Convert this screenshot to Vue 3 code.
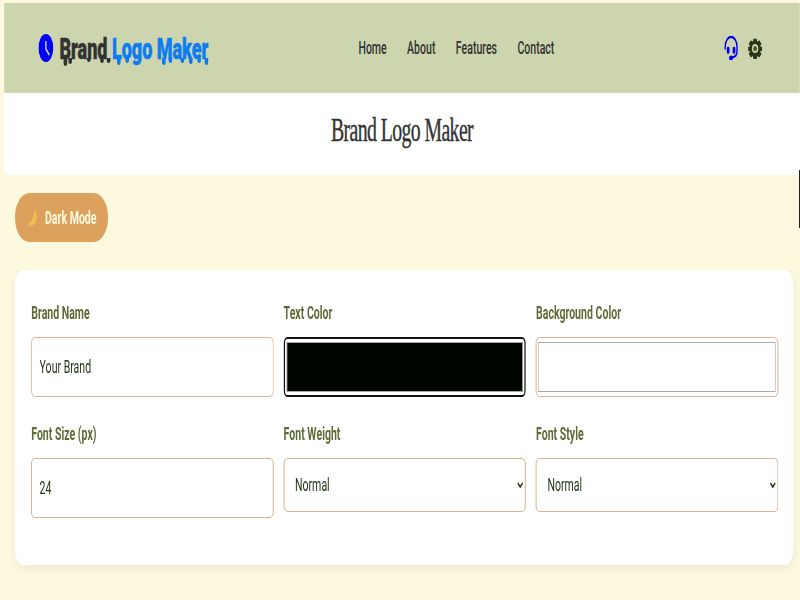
<template>
  <div class="page">
    <div class="stage">
      <nav class="navbar">
        <a class="logo" href="#">
          <svg class="clock" width="25" height="28" viewBox="0 0 26 28" preserveAspectRatio="none">
            <ellipse cx="13" cy="14" rx="12.8" ry="14" fill="#0000f5" />
            <path d="M13 7 L13 15 L19 21" fill="none" stroke="#cfd8ee" stroke-width="2.4" />
          </svg>
          <span class="logo-text">
            <span class="dark">Brand</span> <span class="blue">Logo Maker</span>
            <i
              v-for="d in drips"
              :key="d.x"
              class="drip"
              :style="{ left: d.x + 'px', height: d.h + 'px', background: d.c }"
            ></i>
          </span>
        </a>
        <ul class="links">
          <li v-for="l in links" :key="l"><a href="#">{{ l }}</a></li>
        </ul>
        <div class="icons">
          <svg width="25" height="25" viewBox="0 0 28 28" fill="none" stroke="#0000e6" preserveAspectRatio="none">
            <path d="M3 15 V12 A11 11 0 0 1 25 12 V18 Q25 23 16 24" stroke-width="2.6" />
            <rect x="6" y="12" width="5" height="8" rx="2" fill="#0000e6" stroke="none" />
            <rect x="17" y="12" width="5" height="8" rx="2" fill="#0000e6" stroke="none" />
            <ellipse cx="14" cy="24.5" rx="4" ry="2.6" fill="#0000e6" stroke="none" />
          </svg>
          <svg width="25" height="21" viewBox="0 0 28 28" preserveAspectRatio="none">
            <path
              fill="#283618"
              fill-rule="evenodd"
              d="M11 1h6l1 4 4-2 4 5-3 3 4 1v5l-4 1 3 3-4 5-4-2-1 4h-6l-1-4-4 2-4-5 3-3-4-1v-5l4-1-3-3 4-5 4 2zM14 8a6 6 0 1 0 0 12 6 6 0 0 0 0-12z"
            />
            <circle cx="14" cy="14" r="3.5" fill="#4a5530" />
          </svg>
        </div>
      </nav>

      <header class="title">
        <h1>Brand Logo Maker</h1>
      </header>

      <main class="content">
        <button class="mode">
          <svg width="18" height="18" viewBox="0 0 18 18" preserveAspectRatio="none">
            <path d="M11 0 C17 6 15 17 3 17 C1 17 0 15 1 14 C7 13 9 7 11 0z" fill="#f3bd52" />
          </svg>
          Dark Mode
        </button>

        <form class="card" @submit.prevent>
          <div class="grid">
            <div class="field">
              <label>Brand Name</label>
              <input class="box" type="text" value="Your Brand" />
            </div>
            <div class="field">
              <label>Text Color</label>
              <input class="box swatch focused" type="color" value="#000500" />
            </div>
            <div class="field">
              <label>Background Color</label>
              <input class="box swatch" type="color" value="#ffffff" />
            </div>
            <div class="field">
              <label>Font Size (px)</label>
              <input class="box" type="number" value="24" />
            </div>
            <div class="field">
              <label>Font Weight</label>
              <select class="pick">
                <option>Normal</option>
                <option>Bold</option>
              </select>
            </div>
            <div class="field">
              <label>Font Style</label>
              <select class="pick">
                <option>Normal</option>
                <option>Italic</option>
              </select>
            </div>
          </div>
        </form>
      </main>
    </div>
    <div class="thumb"></div>
  </div>
</template>

<script setup>
const links = ['Home', 'About', 'Features', 'Contact']

const dark = '#333'
const blue = '#0d7cf2'
const drips = [
  { x: 7, h: 8, c: dark },
  { x: 15, h: 6, c: dark },
  { x: 46, h: 4, c: dark },
  { x: 68, h: 5, c: dark },
  { x: 79, h: 5, c: dark },
  { x: 96, h: 7, c: blue },
  { x: 110, h: 5, c: blue },
  { x: 171, h: 7, c: blue },
  { x: 182, h: 5, c: blue },
  { x: 202, h: 5, c: blue },
  { x: 216, h: 6, c: blue },
  { x: 230, h: 5, c: blue },
  { x: 242, h: 7, c: blue }
]
</script>

<style>
html,
body {
  margin: 0;
  background: #fefae0;
  overflow: hidden;
}
</style>

<style scoped>
.page {
  position: relative;
  width: 800px;
  height: 600px;
  overflow: hidden;
  background: #fdf9de;
  font-family: Roboto, "Liberation Sans", sans-serif;
}
/* the whole page is narrowed, as in the reference */
.stage {
  width: 1333px;
  padding: 3px 0 0 7px;
  box-sizing: border-box;
  transform: scaleX(0.6);
  transform-origin: 0 0;
}
.navbar {
  display: flex;
  align-items: center;
  height: 90px;
  padding: 0 62px 0 57px;
  background: #cdd5ae;
}
.logo {
  display: flex;
  align-items: center;
  gap: 10px;
  text-decoration: none;
}
.logo-text {
  position: relative;
  font-size: 30px;
  font-weight: 900;
  white-space: nowrap;
  -webkit-text-stroke: 0.5px currentColor;
}
.dark {
  color: #333;
}
.blue {
  color: #0d7cf2;
}
.drip {
  position: absolute;
  top: 27px;
  width: 6px;
  border-radius: 0 0 3px 3px;
}
.links {
  display: flex;
  gap: 34px;
  margin: 0 0 0 250px;
  padding: 0;
  list-style: none;
}
.links a {
  color: #333;
  font-size: 17.6px;
  font-weight: 500;
  text-decoration: none;
}
.icons {
  display: flex;
  align-items: center;
  gap: 15px;
  margin-left: auto;
}
.title {
  height: 82px;
  padding-bottom: 8px;
  box-sizing: border-box;
  display: flex;
  align-items: center;
  justify-content: center;
  background: #fff;
}
.title h1 {
  margin: 0;
  color: #333;
  font-family: "Liberation Serif", serif;
  font-size: 33px;
  font-weight: 400;
  letter-spacing: -1px;
  -webkit-text-stroke: 0.4px #333;
}
.content {
  padding: 18px 11px 0 18px;
}
.mode {
  display: flex;
  align-items: center;
  gap: 10px;
  width: 155px;
  height: 49px;
  padding: 0 0 0 22px;
  border: none;
  border-radius: 24px;
  background: #dda15e;
  color: #fefae0;
  font-family: inherit;
  font-size: 17.6px;
  font-weight: 700;
}
.card {
  margin-top: 28px;
  padding: 34px 25px 0 27px;
  height: 295px;
  box-sizing: border-box;
  background: #fff;
  border-radius: 14px;
  box-shadow: 0 4px 12px rgba(0, 0, 0, 0.06);
}
.grid {
  display: grid;
  grid-template-columns: repeat(3, 1fr);
  gap: 28px 17px;
  align-items: start;
}
.field label {
  display: block;
  margin-bottom: 14px;
  color: #606c38;
  font-size: 17.6px;
  font-weight: 700;
  line-height: 19px;
}
.box,
.pick {
  display: block;
  width: 100%;
  box-sizing: border-box;
  border: 1px solid #d19f73;
  border-radius: 6px;
  background: #fff;
  color: #283618;
  font-family: inherit;
  font-size: 17.6px;
  outline: none;
}
.box {
  height: 60px;
  padding: 0 13px;
}
.pick {
  height: 54px;
  padding: 0 14px;
}
.swatch {
  padding: 4px 3px;
}
.swatch::-webkit-color-swatch-wrapper {
  padding: 0;
}
.swatch::-webkit-color-swatch {
  border: 1px solid #aaa;
}
.focused {
  border: 2px solid #111;
  padding: 3px 3px;
}
.thumb {
  position: absolute;
  top: 170px;
  right: 0;
  width: 1px;
  height: 58px;
  background: #222;
}
</style>
